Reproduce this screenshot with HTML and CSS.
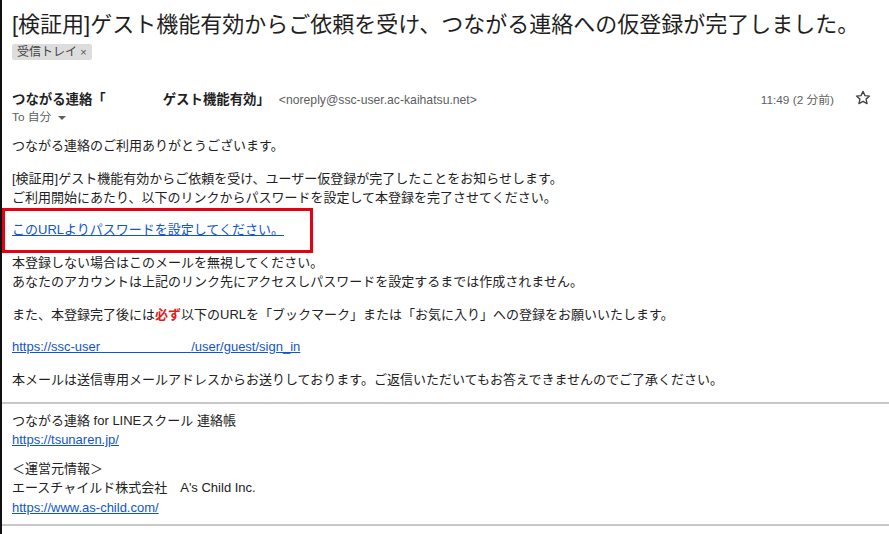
FILE: index.html
```html
<!DOCTYPE html>
<html lang="ja">
<head>
  <meta charset="UTF-8" />
  <meta name="viewport" content="width=device-width, initial-scale=1.0" />
  <title>仮登録のお知らせ</title>
  <link rel="stylesheet" href="styles.css">
</head>
<body>
  <div class="mail">
    <h1 class="subject">[検証用]ゲスト機能有効からご依頼を受け、つながる連絡への仮登録が完了しました。</h1>
    <span class="label">受信トレイ <span class="label-x">×</span></span>

    <div class="sender-row">
      <div class="sender">
        <span class="sender-name">つながる連絡「<span class="blank-name"></span>ゲスト機能有効」</span>
        <span class="sender-mail">&lt;noreply@ssc-user.ac-kaihatsu.net&gt;</span>
      </div>
      <div class="meta">
        <span class="time">11:49 (2 分前)</span>
        <svg class="star" width="18" height="18" viewBox="0 0 24 24">
          <path d="M12 3.2l2.6 5.6 6.1.6-4.6 4.1 1.3 6-5.4-3.1-5.4 3.1 1.3-6-4.6-4.1 6.1-.6z" fill="none" stroke="#444" stroke-width="1.8" stroke-linejoin="round"/>
        </svg>
      </div>
    </div>
    <div class="to">To 自分 <span class="caret"></span></div>

    <div class="body">
      <p>つながる連絡のご利用ありがとうございます。</p>
      <p>[検証用]ゲスト機能有効からご依頼を受け、ユーザー仮登録が完了したことをお知らせします。<br>ご利用開始にあたり、以下のリンクからパスワードを設定して本登録を完了させてください。</p>
      <div class="marked">
        <a href="#">このURLよりパスワードを設定してください。</a>
      </div>
      <p>本登録しない場合はこのメールを無視してください。<br>あなたのアカウントは上記のリンク先にアクセスしパスワードを設定するまでは作成されません。</p>
      <p>また、本登録完了後には<strong class="must">必ず</strong>以下のURLを「ブックマーク」または「お気に入り」への登録をお願いいたします。</p>
      <p><a href="#">https://ssc-user<span class="blank-url">　　　　　　　</span>/user/guest/sign_in</a></p>
      <p>本メールは送信専用メールアドレスからお送りしております。ご返信いただいてもお答えできませんのでご了承ください。</p>

      <div class="footer">
        <p>つながる連絡 for LINEスクール 連絡帳<br><a href="#">https://tsunaren.jp/</a></p>
        <p>＜運営元情報＞<br>エースチャイルド株式会社　A's Child Inc.<br><a href="#">https://www.as-child.com/</a></p>
      </div>
    </div>
  </div>
</body>
</html>
```

FILE: styles.css
```css
body {
  margin: 0;
  background: #fff;
  border-left: 2px solid #111;
  min-height: 534px;
  box-sizing: border-box;
  font-family: "Liberation Sans", "Noto Sans CJK JP", sans-serif;
  color: #222;
}
.mail {
  padding-top: 11px;
}
.subject {
  margin: 0 0 0 10px;
  font-size: 22px;
  font-weight: normal;
  line-height: 28px;
  color: #1f1f1f;
  white-space: nowrap;
}
.label {
  display: inline-block;
  margin: 5px 0 0 10px;
  padding: 0 5px;
  height: 16px;
  line-height: 16px;
  font-size: 12px;
  color: #444;
  background: #ddd;
  border-radius: 2px;
}
.label-x {
  font-size: 11px;
  color: #555;
}
.sender-row {
  display: flex;
  justify-content: space-between;
  align-items: center;
  margin: 28px 0 0 10px;
  height: 20px;
}
.sender {
  display: flex;
  align-items: baseline;
  gap: 9px;
}
.sender-name {
  font-size: 13.4px;
  font-weight: bold;
  color: #1f1f1f;
}
.blank-name {
  display: inline-block;
  width: 57px;
}
.sender-mail {
  font-size: 12.2px;
  color: #5e5e5e;
}
.meta {
  display: flex;
  align-items: center;
  gap: 20px;
  padding-right: 17px;
}
.time {
  font-size: 11.8px;
  color: #5e5e5e;
}
.star {
  display: block;
}
.to {
  margin-left: 10px;
  height: 18px;
  line-height: 18px;
  font-size: 11.8px;
  color: #5e5e5e;
}
.caret {
  display: inline-block;
  margin-left: 3px;
  border-left: 4px solid transparent;
  border-right: 4px solid transparent;
  border-top: 4px solid #5e5e5e;
  vertical-align: middle;
}
.body {
  margin-top: 10px;
  font-size: 13px;
  line-height: 19.5px;
}
.body p {
  margin: 0 0 13px 10px;
}
.body a {
  color: #15c;
}
.must {
  color: #e01e1e;
}
.blank-url {
  white-space: pre;
}
.marked {
  box-sizing: border-box;
  width: 311px;
  height: 45px;
  margin-top: -13px;
  border: 3px solid #e60012;
  display: flex;
  align-items: center;
  padding-left: 7px;
}
.marked + p {
  margin-top: 0;
}
.footer {
  margin-top: 11px;
  padding: 7px 0 7px;
  border-top: 2px solid #c8c8c8;
  border-bottom: 2px solid #c8c8c8;
}
.footer p {
  margin: 0 0 9.5px 10px;
  line-height: 19.3px;
}
.footer p:last-child {
  margin-bottom: 0;
}
```
